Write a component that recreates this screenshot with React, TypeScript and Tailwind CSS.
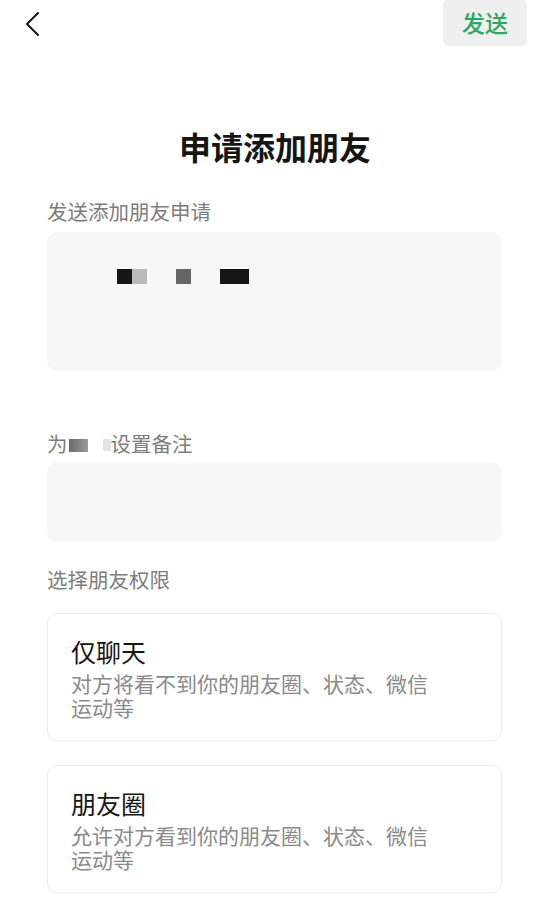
import React from "react";

const FONT = { fontFamily: '"Noto Sans CJK SC", "Noto Sans", sans-serif' };

const permissions = [
  { title: "仅聊天", desc: "对方将看不到你的朋友圈、状态、微信运动等" },
  { title: "朋友圈", desc: "允许对方看到你的朋友圈、状态、微信运动等" },
];

const App: React.FC = () => {
  return (
    <div className="w-[550px] h-[902px] bg-white overflow-hidden" style={FONT}>
      {/* top bar */}
      <div className="flex items-start justify-between h-[46px] pl-[22px] pr-[23px]">
        <button className="mt-[10px] w-[20px] h-[28px] flex items-center justify-center">
          <svg width="16" height="26" viewBox="0 0 16 26" fill="none">
            <path d="M14 2L3 13l11 11" stroke="#111" strokeWidth="2" strokeLinecap="round" strokeLinejoin="round" />
          </svg>
        </button>
        <button className="w-[84px] h-[46px] rounded-b-md rounded-t-sm bg-[#efefef] text-[#2aa862] text-[23px] font-medium leading-none flex items-center justify-center pb-[2px]">
          发送
        </button>
      </div>

      <h1 className="mt-[79px] text-center text-[32px] leading-[42px] font-semibold text-[#151515]">
        申请添加朋友
      </h1>

      <div className="pl-[47px] pr-[48px]">
        <div className="mt-[30px] text-[20.5px] leading-[28px] text-[#7d7d7d]">发送添加朋友申请</div>
        <div className="mt-[7px] h-[139px] rounded-[10px] bg-[#f7f7f7] pt-[37px] pl-[70px]">
          <div className="flex items-center h-[15px]">
            <span className="w-[15px] h-[15px] bg-[#161616]" />
            <span className="w-[15px] h-[15px] bg-[#bababa]" />
            <span className="ml-[29px] w-[15px] h-[15px] bg-[#666666]" />
            <span className="ml-[29px] w-[29px] h-[15px] bg-[#161616]" />
          </div>
        </div>

        <div className="mt-[58px] flex items-center text-[20.5px] leading-[28px] text-[#7d7d7d]">
          <span>为</span>
          <span className="ml-[1px] w-[19px] h-[13px] mt-[4px] bg-gradient-to-r from-[#6a6a6a] to-[#9a9a9a]" />
          <span className="ml-[15px] w-[8px] h-[12px] mt-[4px] bg-[#e4e4e4]" />
          <span>设置备注</span>
        </div>
        <div className="mt-[5px] h-[80px] rounded-[10px] bg-[#f7f7f7]" />

        <div className="mt-[23px] text-[20.5px] leading-[28px] text-[#7d7d7d]">选择朋友权限</div>

        <div className="mt-[20px] flex flex-col gap-[24px]">
          {permissions.map((p) => (
            <div key={p.title} className="h-[128px] rounded-[10px] border border-[#ebebeb] bg-white pt-[21px] pl-[23px]">
              <div className="text-[25px] leading-[32px] text-[#161616]">{p.title}</div>
              <div className="mt-[4px] w-[365px] text-[21px] leading-[24px] text-[#8a8a8a]">{p.desc}</div>
            </div>
          ))}
        </div>
      </div>
    </div>
  );
};

export default App;
